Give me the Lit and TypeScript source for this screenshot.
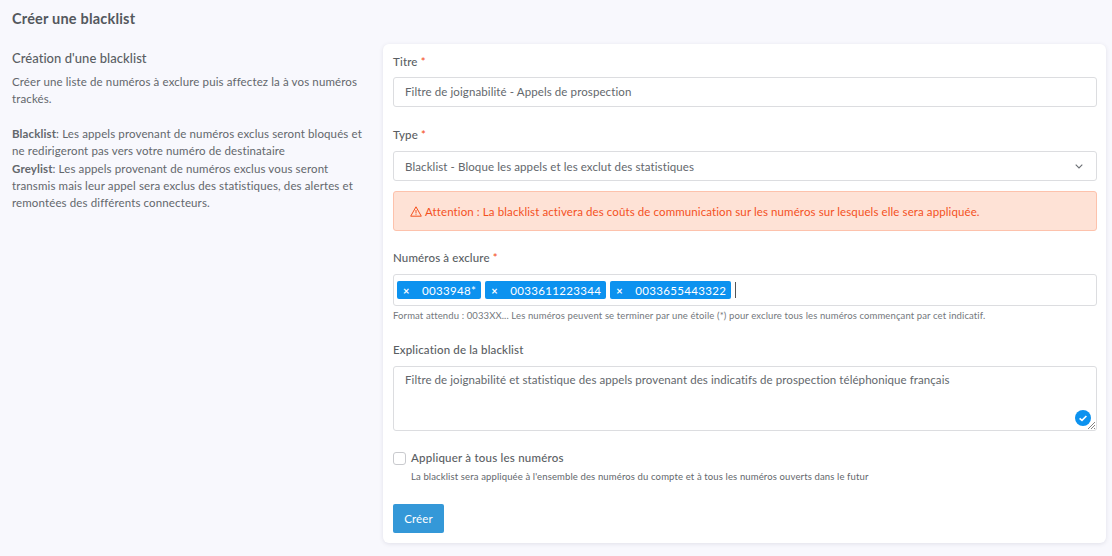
import { LitElement, html, css } from "lit";
import { customElement } from "lit/decorators.js";

@customElement("app-root")
export class AppRoot extends LitElement {
  static styles = css`
    :host { display: block; width: 1112px; height: 556px; overflow: hidden; background: #f8f8fd; font-family: "Lato", "Open Sans", sans-serif; color: #5f6368; font-size: 11.5px; }
    * { box-sizing: border-box; }
    .page-title { margin: 0; padding: 10px 12px 0; font-size: 14.5px; line-height: 17px; font-weight: 700; color: #54585d; letter-spacing: 0.2px; }
    .layout { display: flex; padding: 17px 6px 0 12px; gap: 12px; }
    .side { width: 359px; flex: none; padding-top: 6px; }
    .side h2 { margin: 0 0 7px; font-size: 13px; line-height: 16px; font-weight: 500; color: #5a5e63; letter-spacing: 0.05px; }
    .side p { margin: 0 0 17.5px; font-size: 11.5px; line-height: 17.25px; letter-spacing: 0.125px; color: #63676c; }
    .side b { font-weight: 700; }
    .card { flex: 1; height: 499px; background: #fff; border-radius: 6px; box-shadow: 0 1px 4px rgba(60,60,90,.12); padding: 11px 9px 0 10px; display: flex; flex-direction: column; }
    label { display: block; font-size: 11.5px; line-height: 14px; font-weight: 500; color: #5a5e63; letter-spacing: 0.15px; }
    .req { color: #f4511e; }
    .field { margin-top: 8px; height: 30px; border: 1px solid #dcdde0; border-radius: 3px; display: flex; align-items: center; padding: 0 11px 2px; font-size: 11.5px; letter-spacing: 0.1px; color: #63676c; background: #fff; }
    .field.select { justify-content: space-between; padding: 0 13px 0 11px; margin-top: 9px; }
    .gap { margin-top: 21px; }
    .gap.tight { margin-top: 20px; }
    .alert { margin-top: 10px; height: 40px; background: #fee2d6; border: 1px solid #fdc2ac; border-radius: 3px; color: #f4511e; display: flex; align-items: center; gap: 3px; padding: 0 16px; font-size: 11.5px; letter-spacing: 0.1px; }
    .tags { margin-top: 9px; height: 32px; border: 1px solid #dcdde0; border-radius: 3px; display: flex; align-items: center; gap: 4px; padding: 0 3px; }
    .tag { height: 18px; background: #0c92ef; color: #fff; border-radius: 2px; display: flex; align-items: center; padding: 0 5px; font-size: 11.5px; letter-spacing: 0.33px; }
    .tag i { font-style: normal; width: 20px; font-size: 11px; font-weight: 700; padding-left: 1px; }
    .caret { width: 1px; height: 16px; background: #555; margin-left: 0; }
    .help { margin-top: 4px; font-size: 9.5px; line-height: 12px; letter-spacing: 0.115px; color: #73777c; }
    .area { position: relative; margin-top: 9px; height: 65px; border: 1px solid #dcdde0; border-radius: 3px; padding: 6px 11px; font-size: 11.5px; line-height: 14px; letter-spacing: 0.075px; color: #63676c; }
    .check { position: absolute; right: 5px; bottom: 4px; width: 16px; height: 16px; }
    .grip { position: absolute; right: 0; bottom: 0; width: 9px; height: 9px; }
    .chk-row { display: flex; gap: 5px; margin-top: 20px; align-items: flex-start; }
    .box { width: 13px; height: 13px; border: 1px solid #c9cace; border-radius: 3px; background: #fff; margin-top: 1px; flex: none; }
    .chk-row .t { font-size: 11.5px; line-height: 14px; font-weight: 500; letter-spacing: 0.22px; color: #5a5e63; }
    .chk-row small { display: block; margin-top: 6px; font-size: 9.5px; line-height: 12px; letter-spacing: 0.13px; color: #63676c; }
    button { margin-top: 21px; width: 51px; height: 29px; border: none; border-radius: 2px; background: #3498d8; color: #fff; font: inherit; font-size: 11.5px; letter-spacing: 0.1px; padding: 0; }
  `;

  render() {
    return html`
      <h1 class="page-title">Créer une blacklist</h1>
      <div class="layout">
        <aside class="side">
          <h2>Création d'une blacklist</h2>
          <p>Créer une liste de numéros à exclure puis affectez la à vos numéros trackés.</p>
          <p><b>Blacklist</b>: Les appels provenant de numéros exclus seront bloqués et ne redirigeront pas vers votre numéro de destinataire<br /><b>Greylist</b>: Les appels provenant de numéros exclus vous seront transmis mais leur appel sera exclus des statistiques, des alertes et remontées des différents connecteurs.</p>
        </aside>
        <section class="card">
          <label>Titre <span class="req">*</span></label>
          <div class="field">Filtre de joignabilité - Appels de prospection</div>
          <label class="gap">Type <span class="req">*</span></label>
          <div class="field select">
            <span>Blacklist - Bloque les appels et les exclut des statistiques</span>
            <svg width="8" height="5" viewBox="0 0 8 5" fill="none" stroke="#6b6f74" stroke-width="1.1"><path d="M.7.7 4 4l3.3-3.3" /></svg>
          </div>
          <div class="alert">
            <svg width="12" height="11" viewBox="0 0 12 11" fill="none" stroke="#f4511e" stroke-width="1" stroke-linejoin="round"><path d="M6 .8 11.3 10.2H.7Z" /><path d="M6 4v3.4M6 8.3v.8" /></svg>
            <span>Attention : La blacklist activera des coûts de communication sur les numéros sur lesquels elle sera appliquée.</span>
          </div>
          <label class="gap tight">Numéros à exclure <span class="req">*</span></label>
          <div class="tags">
            <div class="tag"><i>×</i><span>0033948*</span></div>
            <div class="tag"><i>×</i><span>0033611223344</span></div>
            <div class="tag"><i>×</i><span>0033655443322</span></div>
            <div class="caret"></div>
          </div>
          <div class="help">Format attendu : 0033XX... Les numéros peuvent se terminer par une étoile (*) pour exclure tous les numéros commençant par cet indicatif.</div>
          <label class="gap">Explication de la blacklist</label>
          <div class="area">
            Filtre de joignabilité et statistique des appels provenant des indicatifs de prospection téléphonique français
            <svg class="check" viewBox="0 0 16 16"><circle cx="8" cy="8" r="8" fill="#0c92ef" /><path d="M4.6 8.3 7 10.4 11.4 6" fill="none" stroke="#fff" stroke-width="1.6" /></svg>
            <svg class="grip" viewBox="0 0 9 9" stroke="#666" stroke-width=".8"><path d="M1 8 8 1M4 8 8 4M7 8 8 7" /></svg>
          </div>
          <div class="chk-row">
            <div class="box"></div>
            <div>
              <div class="t">Appliquer à tous les numéros</div>
              <small>La blacklist sera appliquée à l'ensemble des numéros du compte et à tous les numéros ouverts dans le futur</small>
            </div>
          </div>
          <div><button>Créer</button></div>
        </section>
      </div>
    `;
  }
}
